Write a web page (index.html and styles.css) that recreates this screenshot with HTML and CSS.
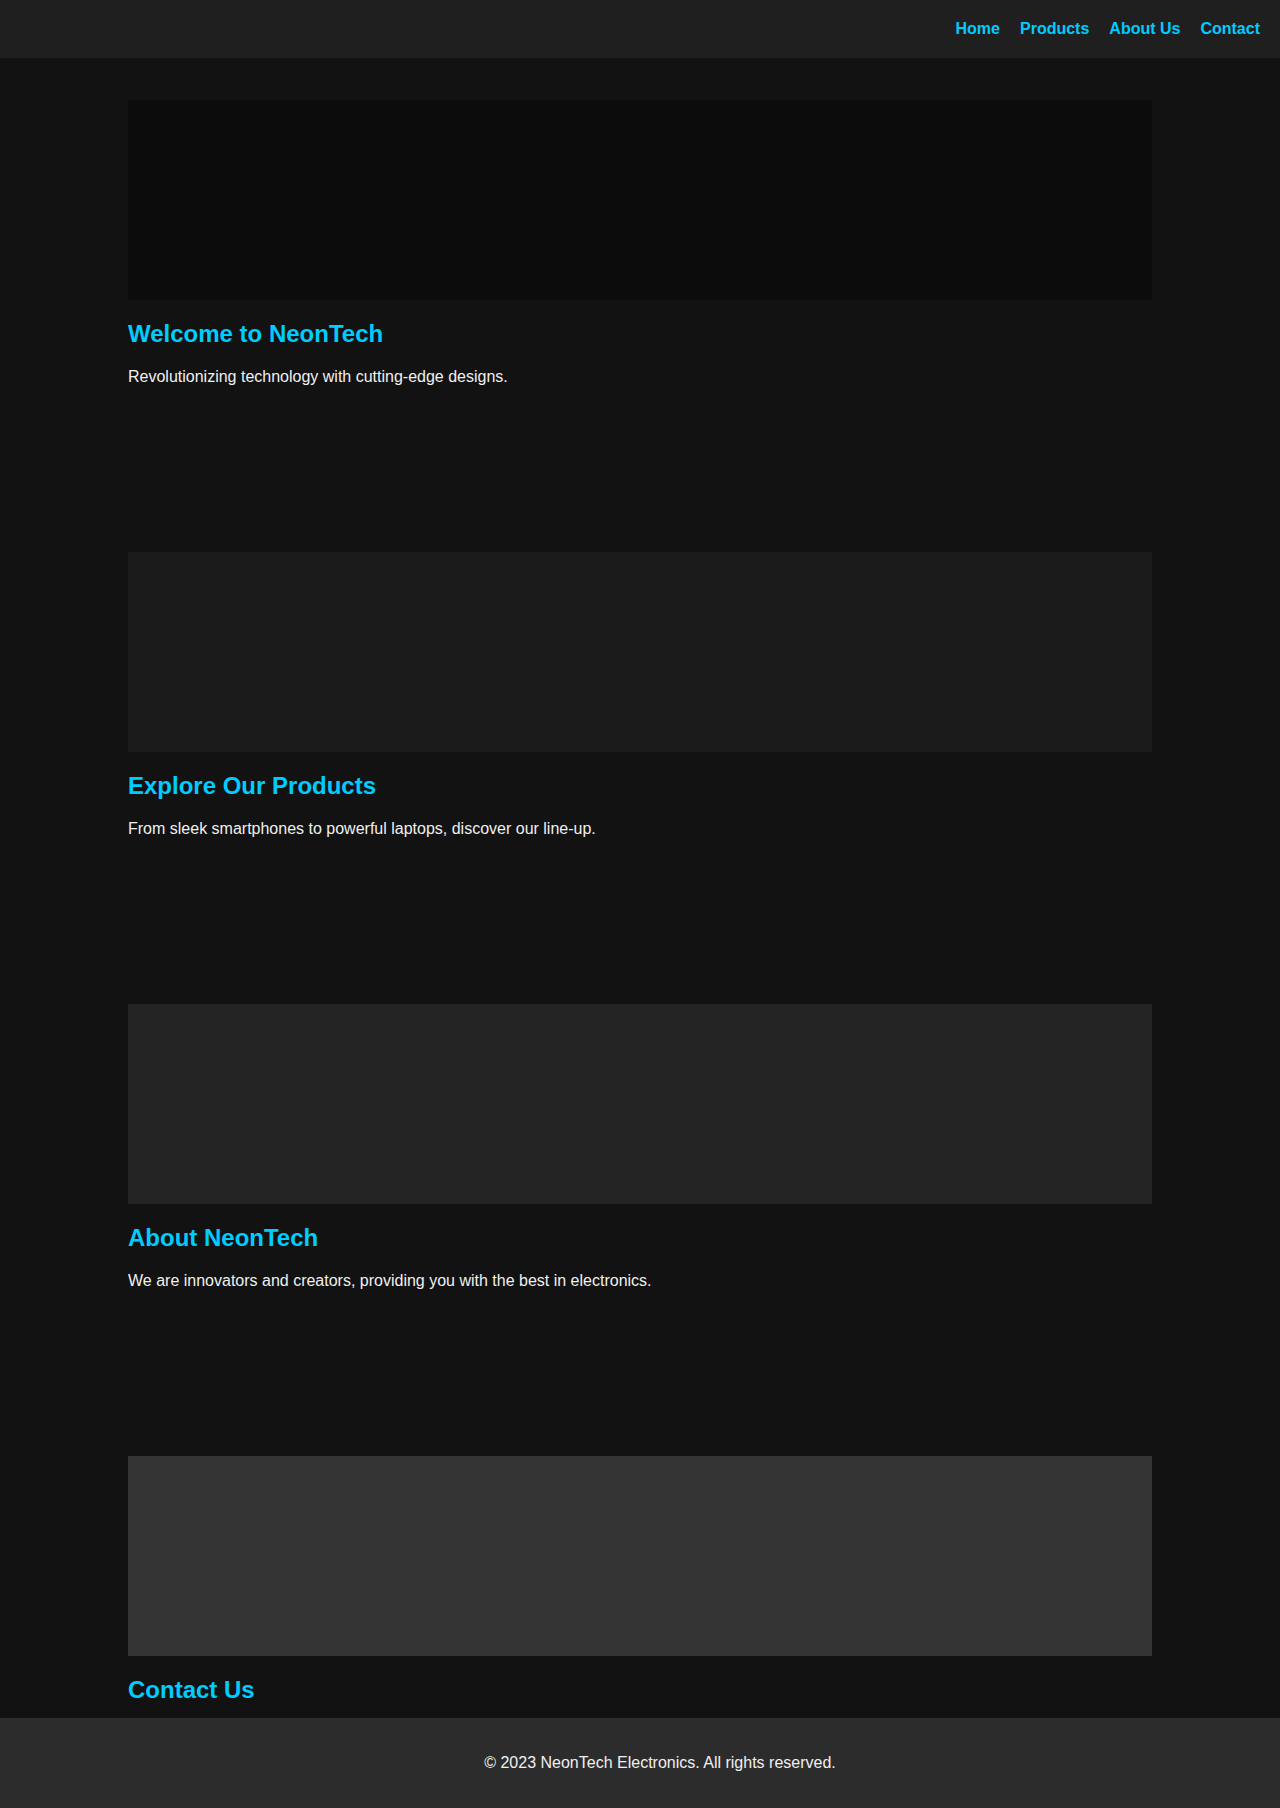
FILE: index.html
```html
<!DOCTYPE html>
<html lang="en">
<head>
<meta charset="utf-8">
<title>NeonTech Electronics</title>
<link rel="stylesheet" href="styles.css">
</head>
<body>
<header class="site-header">
  <nav class="nav">
    <a href="#home">Home</a>
    <a href="#products">Products</a>
    <a href="#about">About Us</a>
    <a href="#contact">Contact</a>
  </nav>
</header>
<main class="main">
  <section class="section" id="home">
    <div class="visual visual-1"></div>
    <h2>Welcome to NeonTech</h2>
    <p>Revolutionizing technology with cutting-edge designs.</p>
  </section>
  <section class="section" id="products">
    <div class="visual visual-2"></div>
    <h2>Explore Our Products</h2>
    <p>From sleek smartphones to powerful laptops, discover our line-up.</p>
  </section>
  <section class="section" id="about">
    <div class="visual visual-3"></div>
    <h2>About NeonTech</h2>
    <p>We are innovators and creators, providing you with the best in electronics.</p>
  </section>
  <section class="section" id="contact">
    <div class="visual visual-4"></div>
    <h2>Contact Us</h2>
    <p>Get in touch with our team for support and inquiries.</p>
  </section>
</main>
<footer class="site-footer">
  <p>&copy; 2023 NeonTech Electronics. All rights reserved.</p>
</footer>
</body>
</html>
```
FILE: styles.css
```css
html, body {
  margin: 0;
  padding: 0;
}
body {
  background: #121212;
  color: #f0f0f0;
  font-family: "Liberation Sans", Arial, sans-serif;
  font-size: 16px;
}
.site-header {
  background: #1f1f1f;
  padding: 20px;
}
.nav {
  display: flex;
  justify-content: flex-end;
  gap: 20px;
}
.nav a {
  color: #00ccff;
  font-weight: bold;
  text-decoration: none;
}
.main {
  max-width: 1024px;
  margin: 0 auto;
  padding-bottom: 120px;
}
.section {
  box-sizing: border-box;
  min-height: 452px;
  padding-top: 42px;
}
.visual {
  height: 200px;
}
.visual-1 { background: #0c0c0c; }
.visual-2 { background: #1b1b1b; }
.visual-3 { background: #242424; }
.visual-4 { background: #333333; }
.section h2 {
  color: #00ccff;
  font-size: 24px;
  margin: 20px 0 20px;
}
.section p {
  margin: 0 0 16px;
}
.site-footer {
  position: fixed;
  left: 0;
  bottom: 0;
  width: 100%;
  background: #2c2c2c;
  text-align: center;
  padding: 36px 20px;
}
.site-footer p {
  margin: 0;
}
```
